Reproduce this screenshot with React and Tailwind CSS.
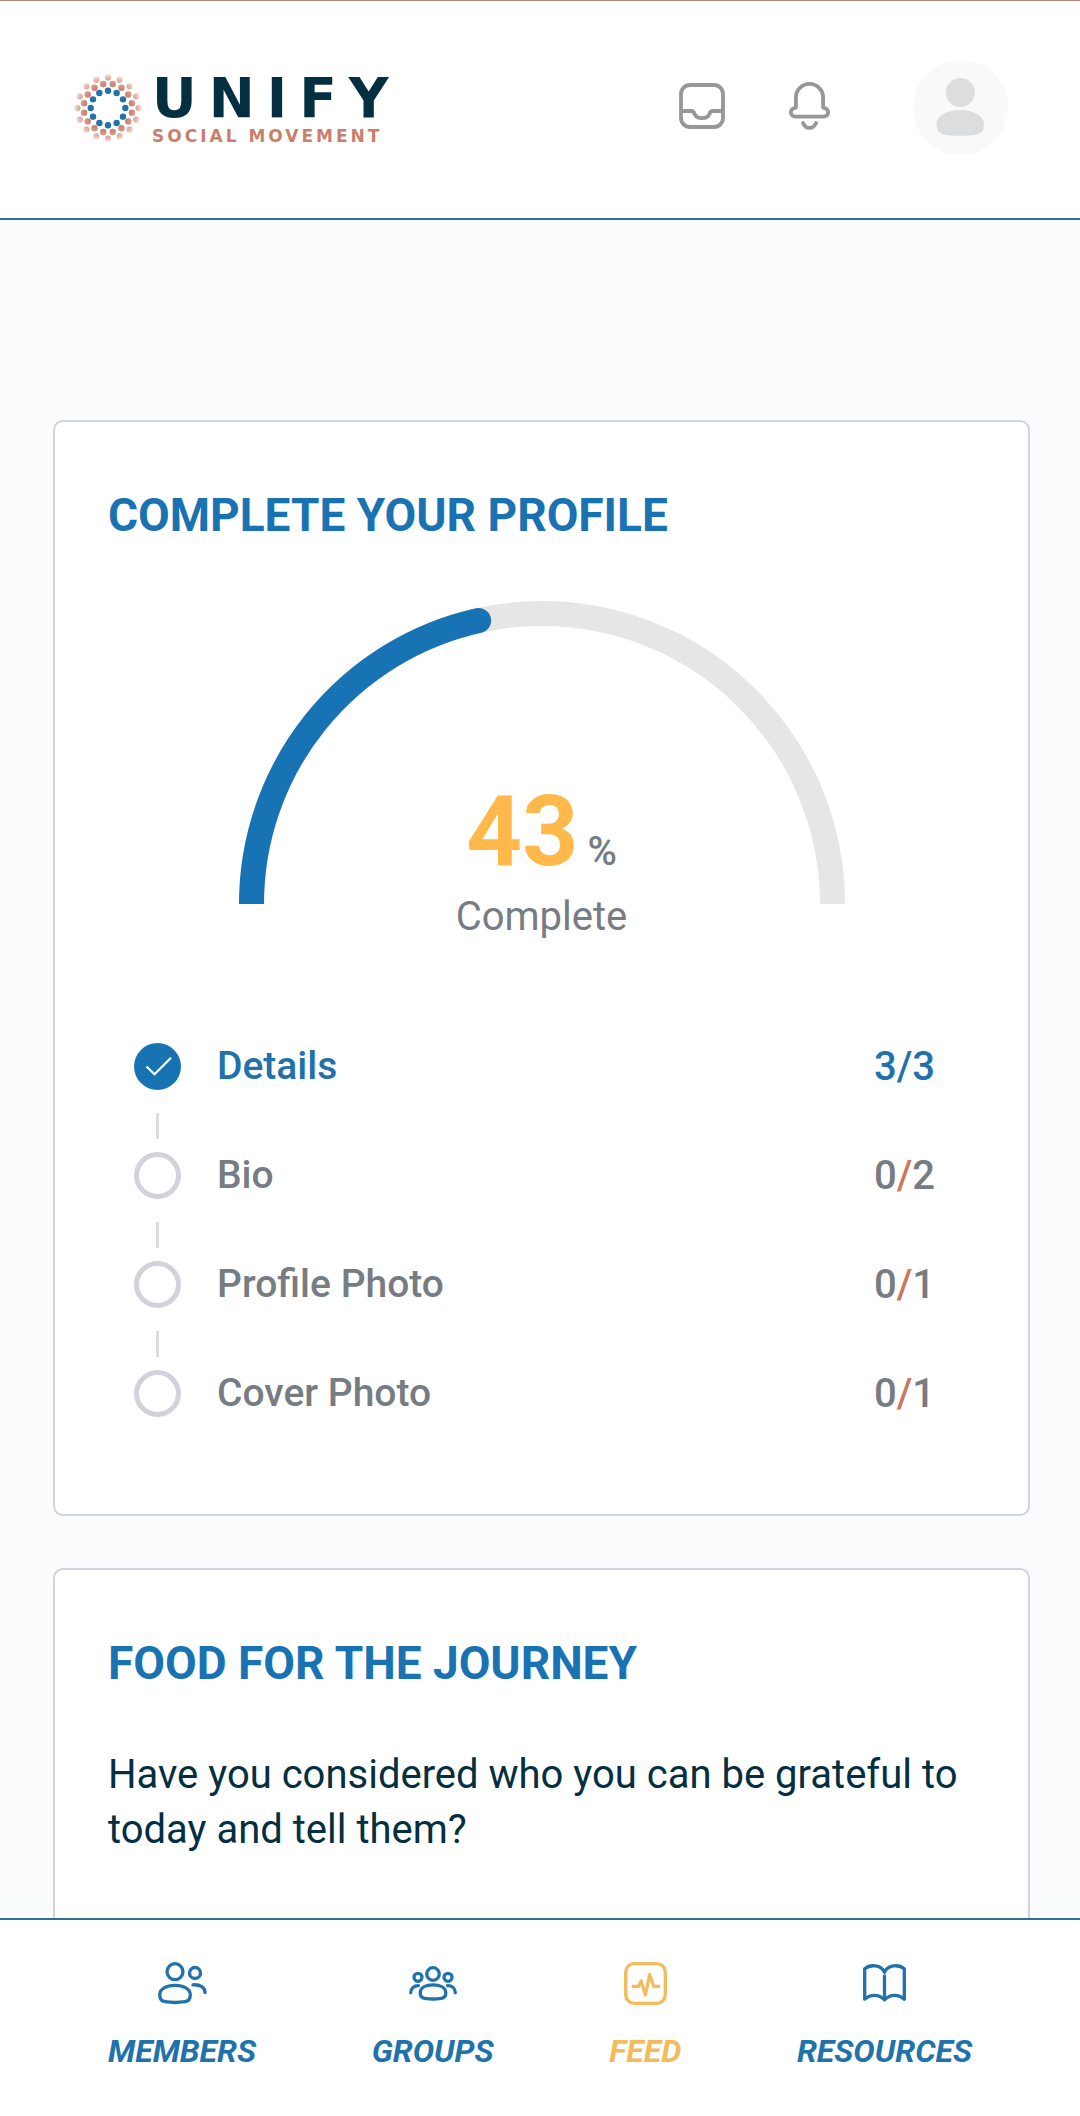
const steps = [
  { label: "Details", done: 3, total: 3 },
  { label: "Bio", done: 0, total: 2 },
  { label: "Profile Photo", done: 0, total: 1 },
  { label: "Cover Photo", done: 0, total: 1 },
];

const ring = (count, radius, offset = 0) =>
  Array.from({ length: count }, (_, i) => {
    const angle = ((i + offset) / count) * Math.PI * 2;
    return { cx: 34 + radius * Math.sin(angle), cy: 34 - radius * Math.cos(angle) };
  });

const LogoMark = () => (
  <svg width="68" height="68" viewBox="0 0 68 68" aria-hidden="true">
    <defs>
      <radialGradient id="fade" gradientUnits="userSpaceOnUse" cx="34" cy="34" r="34">
        <stop offset="0.62" stopColor="#c97c69" />
        <stop offset="0.8" stopColor="#d79a8a" />
        <stop offset="1" stopColor="#f5e2dc" />
      </radialGradient>
    </defs>
    {ring(12, 17.3).map((dot, i) => (
      <circle key={i} {...dot} r="3.2" fill="#2372a9" />
    ))}
    {ring(16, 24.4, 0.5).map((dot, i) => (
      <circle key={i} {...dot} r="3.2" fill="url(#fade)" />
    ))}
    {ring(16, 30.6).map((dot, i) => (
      <circle key={i} {...dot} r="3.1" fill="url(#fade)" />
    ))}
  </svg>
);

const InboxIcon = () => (
  <svg width="46" height="46" viewBox="0 0 46 46" fill="none" stroke="currentColor" strokeWidth="3.8">
    <rect x="2" y="2" width="42" height="42" rx="9" />
    <path d="M2 28h10c2.4 0 3 1.400 3.600 3 1 2.600 3.600 4.200 7.400 4.200s6.400-1.600 7.400-4.200c.6-1.600 1.200-3 3.600-3h10" />
  </svg>
);

const BellIcon = () => (
  <svg
    width="41"
    height="48"
    viewBox="0 0 41 48"
    fill="none"
    stroke="currentColor"
    strokeWidth="3.8"
    strokeLinecap="round"
    strokeLinejoin="round"
  >
    <path d="M6.900 25.600V15.500a13.600 13.600 0 0 1 27.200 0v10.100c3 .6 5 2.400 5 4.700 0 2.600-2 4.300-4.600 4.300h-28c-2.600 0-4.600-1.700-4.600-4.300 0-2.300 2-4.100 5-4.700Z" />
    <path d="M14 41c1.300 3.200 3.700 4.900 6.500 4.900S25.700 44.200 27 41" />
  </svg>
);

const Avatar = () => (
  <svg width="95" height="95" viewBox="0 0 95 95" aria-hidden="true">
    <circle cx="47.500" cy="47.500" r="47.500" fill="#f9f9f9" />
    <g fill="#dcdddf">
      <circle cx="47.300" cy="32.500" r="14.500" />
      <path d="M47.300 50c13 0 23.700 6 23.700 14 0 6-2 9.500-8 10.700-8 1.300-23.400 1.300-31.400 0-6-1.200-8-4.700-8-10.700 0-8 10.700-14 23.700-14Z" />
    </g>
  </svg>
);

const MembersIcon = () => (
  <svg width="49" height="43" viewBox="0 0 49 43" fill="none" stroke="currentColor" strokeWidth="3.300" strokeLinecap="round">
    <circle cx="17" cy="9.700" r="8" />
    <circle cx="37" cy="11" r="5.500" />
    <path d="M17 23.400c8.500 0 15.300 3.400 15.300 9.300 0 4.200-1.300 6.300-5.300 7-5 .8-15 .8-20 0-4-.7-5.300-2.800-5.300-7 0-5.900 6.800-9.300 15.300-9.300Z" />
    <path d="M35 22.800c7.500-.5 12 2.700 12 7.700" />
  </svg>
);

const GroupsIcon = () => (
  <svg width="48" height="35" viewBox="0 0 48 35" fill="none" stroke="currentColor" strokeWidth="3.300" strokeLinecap="round">
    <circle cx="24" cy="8" r="6.300" />
    <circle cx="9" cy="11.300" r="4" />
    <circle cx="39" cy="11.300" r="4" />
    <path d="M24 18.800c7.300 0 12.800 2.800 12.800 8 0 3.400-1.200 5.100-4.500 5.600-4.200.6-12.400.6-16.600 0-3.300-.5-4.500-2.200-4.500-5.600 0-5.200 5.500-8 12.800-8Z" />
    <path d="M9.500 19.600c-4.800 0-7.800 3-7.800 7.200M38.500 19.600c4.800 0 7.800 3 7.800 7.200" />
  </svg>
);

const FeedIcon = () => (
  <svg
    width="43"
    height="43"
    viewBox="0 0 43 43"
    fill="none"
    stroke="currentColor"
    strokeWidth="3.300"
    strokeLinecap="round"
    strokeLinejoin="round"
  >
    <rect x="1.700" y="1.700" width="39.600" height="39.600" rx="8.500" />
    <path d="M9 24.300h5.500l2.700-5.300 4.200 14 4.300-20.500 4 11.800h5" />
  </svg>
);

const BookIcon = () => (
  <svg
    width="43"
    height="38"
    viewBox="0 0 43 38"
    fill="none"
    stroke="currentColor"
    strokeWidth="3.300"
    strokeLinecap="round"
    strokeLinejoin="round"
  >
    <path d="M21.500 8.300C18 .3 7 .3 1.700 4.700v30.500c6-5.200 13.800-5.200 19.800.6 6-5.800 13.800-5.800 19.800-.6V4.700C36 .3 25 .3 21.500 8.300Z" />
    <path d="M21.500 12v23" />
  </svg>
);

const tabs = [
  { label: "Members", Icon: MembersIcon },
  { label: "Groups", Icon: GroupsIcon },
  { label: "Feed", Icon: FeedIcon, active: true },
  { label: "Resources", Icon: BookIcon },
];

const Card = ({ title, children }) => (
  <section className="rounded-[10px] border-2 border-[#d2d3da] bg-white px-[53px] pt-[61px] pb-[97px]">
    <h2 className="text-[46px] leading-[64px] font-bold uppercase text-[#1972b2]">{title}</h2>
    {children}
  </section>
);

const Gauge = ({ percent }) => {
  const angle = (percent / 100) * Math.PI;
  const x = 303 - 290.5 * Math.cos(angle);
  const y = 303 - 290.5 * Math.sin(angle);

  return (
    <div className="mt-[54px] flex flex-col items-center">
      <svg className="block" width="606" height="303" viewBox="0 0 606 303" fill="none" strokeWidth="25" aria-hidden="true">
        <path d="M12.500 303a290.500 290.500 0 0 1 581 0" stroke="#e6e6e6" />
        <path d={`M12.5 318V303A290.5 290.5 0 0 1 ${x} ${y}`} stroke="#1873b4" strokeLinecap="round" />
      </svg>
      <div className="-mt-[129px] flex items-baseline gap-[9px]">
        <span className="text-[98px] leading-[114px] font-bold text-[#feb94a]">{percent}</span>
        <span className="text-[40px] leading-[56px] font-medium text-[#777c82]">%</span>
      </div>
      <p className="text-[40px] leading-[56px] text-[#777c82]">Complete</p>
    </div>
  );
};

const Step = ({ label, done, total, last }) => {
  const complete = done === total;

  return (
    <li>
      <a
        href="#profile"
        className={`flex h-[47px] items-center text-[39px] font-medium ${complete ? "text-[#2172ab]" : "text-[#777c82]"}`}
      >
        {complete ? (
          <span className="flex size-[47px] items-center justify-center rounded-full bg-[#1873b4]">
            <svg width="47" height="47" viewBox="0 0 47 47" fill="none" stroke="#fff" strokeWidth="2.200">
              <path d="M12.500 23.500l8 7.800L37 14.800" />
            </svg>
          </span>
        ) : (
          <span className="size-[47px] rounded-full border-5 border-[#d2d3da]" />
        )}
        <span className="ml-9 flex-1">{label}</span>
        <span className="text-[40px]">
          {done}
          <span className={complete ? "" : "text-[#c97863]"}>/</span>
          {total}
        </span>
      </a>
      {!last && <div className="mt-[23px] mb-[13px] ml-[22px] h-[26px] w-[3px] bg-[#dcdde2]" />}
    </li>
  );
};

export default function App() {
  return (
    <div className="flex h-screen flex-col bg-[#fafbfd] font-['Roboto',sans-serif]">
      <header className="flex items-center justify-between border-t border-b-2 border-t-[#b58679] border-b-[#2f6f92] bg-white pt-[59px] pr-[72px] pb-[63px] pl-[74px]">
        <a href="#home" className="flex items-center gap-[10px] font-['DejaVu_Sans',sans-serif] font-bold">
          <LogoMark />
          <span className="flex flex-col">
            <span className="text-[55px] leading-[56px] tracking-[12px] text-[#042f40]">UNIFY</span>
            <span className="text-[17px] leading-5 tracking-[3px] text-[#c97f6b]">SOCIAL MOVEMENT</span>
          </span>
        </a>
        <div className="flex items-center text-[#969798]">
          <button type="button" aria-label="Inbox" className="mr-16 pb-1">
            <InboxIcon />
          </button>
          <button type="button" aria-label="Notifications" className="mr-[83px] pb-1">
            <BellIcon />
          </button>
          <button type="button" aria-label="Account">
            <Avatar />
          </button>
        </div>
      </header>

      <main className="flex min-h-0 flex-1 flex-col overflow-y-auto pt-[200px] pr-[50px] pl-[53px] [scrollbar-width:none]">
        <div className="flex flex-col gap-[52px]">
          <Card title="Complete your profile">
            <Gauge percent={43} />
            <ul className="mt-[98px] pr-10 pl-[26px]">
              {steps.map((step, index) => (
                <Step key={step.label} {...step} last={index === steps.length - 1} />
              ))}
            </ul>
          </Card>
          <Card title="Food for the journey">
            <p className="mt-[52px] text-[40px] leading-[55px] text-[#042f40]">
              Have you considered who you can be grateful to today and tell them?
            </p>
          </Card>
        </div>
      </main>

      {/* Bottom tab bar */}
      <nav className="flex justify-between border-t-2 border-[#2f6f92] bg-white px-[108px] pt-[35px] pb-[45px]">
        {tabs.map(({ label, Icon, active }) => (
          <a
            key={label}
            href={`#${label.toLowerCase()}`}
            className={`flex flex-col items-center gap-5 ${active ? "text-[#f3bb5c]" : "text-[#2172ab]"}`}
          >
            <span className="flex h-14 items-center">
              <Icon />
            </span>
            <span className="text-[32px] leading-10 font-bold uppercase italic">{label}</span>
          </a>
        ))}
      </nav>
    </div>
  );
}
